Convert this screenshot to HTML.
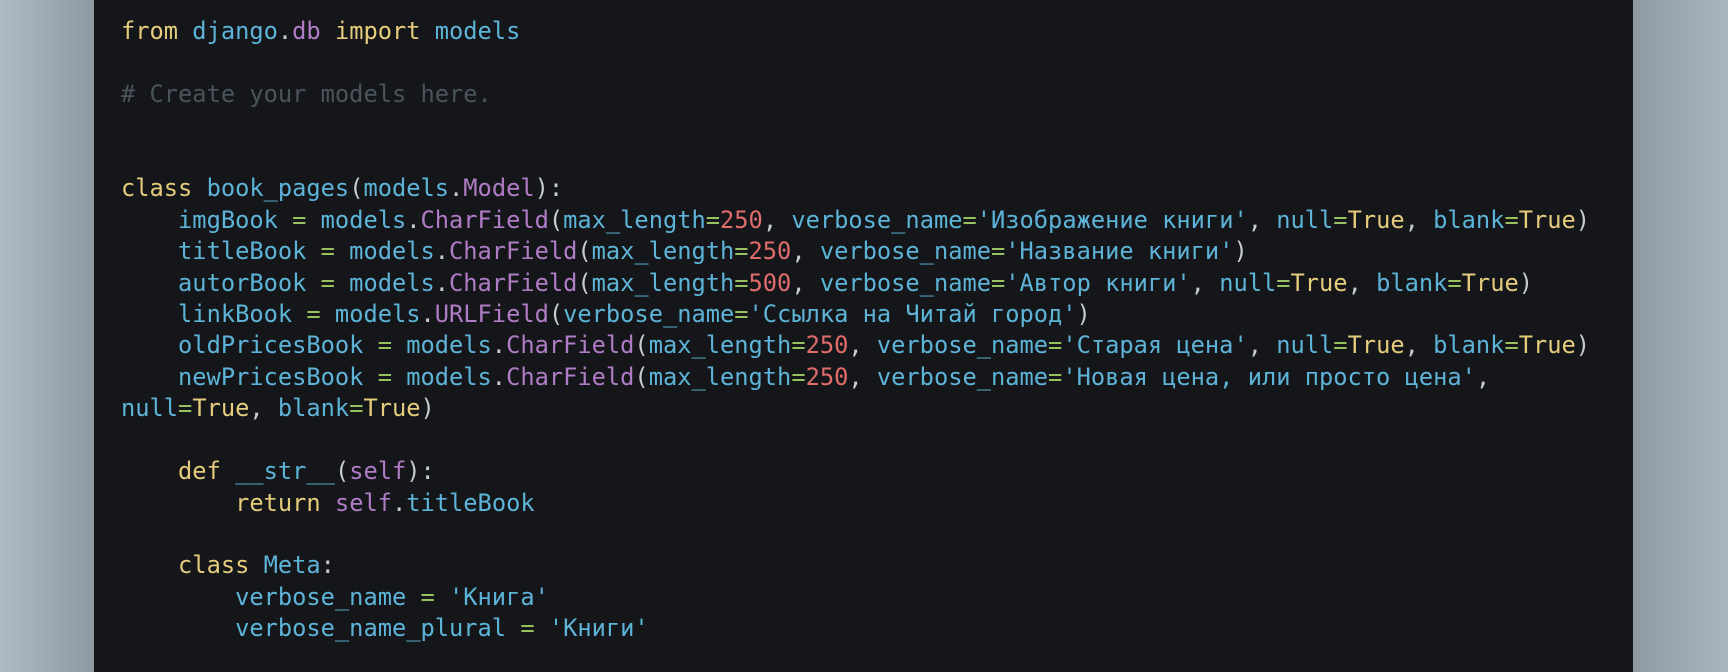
<!DOCTYPE html>
<html><head><meta charset="utf-8"><style>
html,body{margin:0;padding:0;width:1728px;height:672px;overflow:hidden;background:linear-gradient(90deg,#b0bac2 0%,#8e99a2 5.4%,#8e99a2 94.5%,#aab5be 100%);}
.p{position:absolute;left:94px;top:0;width:1539px;height:672px;background:#141619;}
pre{position:absolute;left:121px;top:16px;margin:0;font-family:"DejaVu Sans Mono","Liberation Mono",monospace;font-size:23.7px;line-height:31.43px;color:#5db4d8;}
.k{color:#e5cc7d}.m{color:#b07cc6}.n{color:#e06c6c}.g{color:#98c15f}.w{color:#c8ccd2}.c{color:#4a545c}
</style></head><body><div class="p"></div>
<pre><span class="k">from</span> django<span class="w">.</span><span class="m">db</span> <span class="k">import</span> models

<span class="c"># Create your models here.</span>


<span class="k">class</span> book_pages<span class="w">(</span>models<span class="w">.</span><span class="m">Model</span><span class="w">):</span>
    imgBook <span class="g">=</span> models<span class="w">.</span><span class="m">CharField</span><span class="w">(</span>max_length<span class="g">=</span><span class="n">250</span><span class="w">,</span> verbose_name<span class="g">=</span>'Изображение книги'<span class="w">,</span> null<span class="g">=</span><span class="k">True</span><span class="w">,</span> blank<span class="g">=</span><span class="k">True</span><span class="w">)</span>
    titleBook <span class="g">=</span> models<span class="w">.</span><span class="m">CharField</span><span class="w">(</span>max_length<span class="g">=</span><span class="n">250</span><span class="w">,</span> verbose_name<span class="g">=</span>'Название книги'<span class="w">)</span>
    autorBook <span class="g">=</span> models<span class="w">.</span><span class="m">CharField</span><span class="w">(</span>max_length<span class="g">=</span><span class="n">500</span><span class="w">,</span> verbose_name<span class="g">=</span>'Автор книги'<span class="w">,</span> null<span class="g">=</span><span class="k">True</span><span class="w">,</span> blank<span class="g">=</span><span class="k">True</span><span class="w">)</span>
    linkBook <span class="g">=</span> models<span class="w">.</span><span class="m">URLField</span><span class="w">(</span>verbose_name<span class="g">=</span>'Ссылка на Читай город'<span class="w">)</span>
    oldPricesBook <span class="g">=</span> models<span class="w">.</span><span class="m">CharField</span><span class="w">(</span>max_length<span class="g">=</span><span class="n">250</span><span class="w">,</span> verbose_name<span class="g">=</span>'Старая цена'<span class="w">,</span> null<span class="g">=</span><span class="k">True</span><span class="w">,</span> blank<span class="g">=</span><span class="k">True</span><span class="w">)</span>
    newPricesBook <span class="g">=</span> models<span class="w">.</span><span class="m">CharField</span><span class="w">(</span>max_length<span class="g">=</span><span class="n">250</span><span class="w">,</span> verbose_name<span class="g">=</span>'Новая цена, или просто цена'<span class="w">,</span>
null<span class="g">=</span><span class="k">True</span><span class="w">,</span> blank<span class="g">=</span><span class="k">True</span><span class="w">)</span>

    <span class="k">def</span> __str__<span class="w">(</span><span class="m">self</span><span class="w">):</span>
        <span class="k">return</span> <span class="m">self</span><span class="w">.</span>titleBook

    <span class="k">class</span> Meta<span class="w">:</span>
        verbose_name <span class="g">=</span> 'Книга'
        verbose_name_plural <span class="g">=</span> 'Книги'</pre>
</body></html>
